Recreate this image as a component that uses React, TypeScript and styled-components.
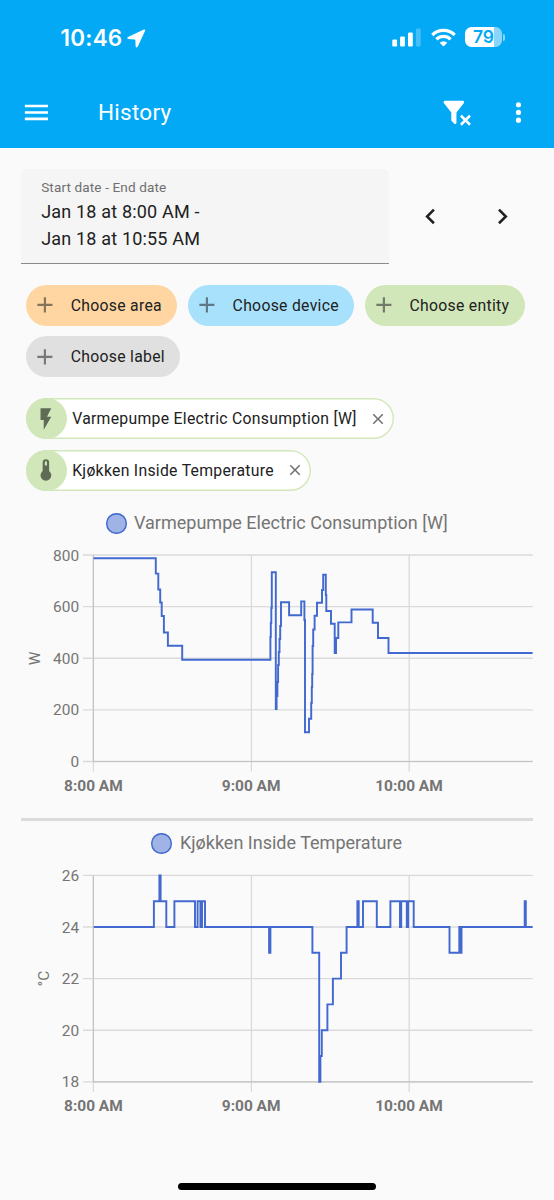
import React from "react";
import styled, { createGlobalStyle } from "styled-components";

const GlobalStyle = createGlobalStyle`
  *, *::before, *::after { box-sizing: border-box; }
  body {
    margin: 0;
    background: #fafafa;
    color: #212121;
    font-family: Roboto, "Noto Sans", sans-serif;
  }
  button { font: inherit; color: inherit; border: 0; background: none; padding: 0; margin: 0; }
`;

const paths = {
  menu: "M3,6H21V8H3V6M3,11H21V13H3V11M3,16H21V18H3V16Z",
  filterRemove:
    "M14.76,20.83L17.6,18L14.76,15.17L16.17,13.76L19,16.57L21.83,13.76L23.24,15.17L20.43,18L23.24,20.83L21.83,22.24L19,19.4L16.17,22.24L14.76,20.83M12,12V19.88C12.04,20.18 11.94,20.5 11.71,20.71C11.32,21.1 10.69,21.1 10.3,20.71L8.29,18.7C8.06,18.47 7.96,18.16 8,17.87V12H7.97L2.21,4.62C1.87,4.19 1.95,3.56 2.38,3.22C2.57,3.08 2.78,3 3,3V3H17V3C17.22,3 17.43,3.08 17.62,3.22C18.05,3.56 18.13,4.19 17.79,4.62L12.03,12H12Z",
  dots: "M12,16A2,2 0 0,1 14,18A2,2 0 0,1 12,20A2,2 0 0,1 10,18A2,2 0 0,1 12,16M12,10A2,2 0 0,1 14,12A2,2 0 0,1 12,14A2,2 0 0,1 10,12A2,2 0 0,1 12,10M12,4A2,2 0 0,1 14,6A2,2 0 0,1 12,8A2,2 0 0,1 10,6A2,2 0 0,1 12,4Z",
  chevronLeft: "M15.41,16.58L10.83,12L15.41,7.41L14,6L8,12L14,18L15.41,16.58Z",
  chevronRight: "M8.59,16.58L13.17,12L8.59,7.41L10,6L16,12L10,18L8.59,16.58Z",
  plus: "M19,13H13V19H11V13H5V11H11V5H13V11H19V13Z",
  close:
    "M19,6.41L17.59,5L12,10.59L6.41,5L5,6.41L10.59,12L5,17.59L6.41,19L12,13.41L17.59,19L19,17.59L13.41,12L19,6.41Z",
  flash: "M7,2V13H10V22L17,10H13L17,2H7Z",
  thermometer:
    "M15 13V5A3 3 0 0 0 9 5V13A5 5 0 1 0 15 13M12 4A1 1 0 0 1 13 5V8H11V5A1 1 0 0 1 12 4Z",
};

const IconSvg = styled.svg<{ $size: number }>`
  display: block;
  flex: none;
  width: ${(p) => p.$size}px;
  height: ${(p) => p.$size}px;
  fill: currentColor;
`;

function Icon({ name, size = 30.9 }: { name: keyof typeof paths; size?: number }) {
  return (
    <IconSvg $size={size} viewBox="0 0 24 24" aria-hidden="true">
      <path d={paths[name]} />
    </IconSvg>
  );
}

const Page = styled.div`
  width: 554px;
  height: 1200px;
  display: flex;
  flex-direction: column;
  overflow: hidden;
`;

const Header = styled.header`
  height: 148px;
  flex: none;
  background: #04a9f5;
  color: #fff;
`;

const StatusBar = styled.div`
  height: 76px;
  padding: 0 49.2px 0 60.5px;
  display: flex;
  justify-content: space-between;
  align-items: center;
`;

const Clock = styled.div`
  display: flex;
  align-items: center;
  gap: 4.7px;
  font: 600 22.4px/26px Inter, sans-serif;
  letter-spacing: 0.25px;
`;

const StatusIcons = styled.div`
  display: flex;
  align-items: center;
  gap: 10px;
  margin-top: -2px;
  svg { display: block; }
`;

const Battery = styled.div`
  display: flex;
  align-items: center;
  gap: 1px;
  margin-left: -1px;
`;

const BatteryBody = styled.div`
  width: 37px;
  height: 20px;
  border-radius: 6.5px;
  background: linear-gradient(to right, #fff 78%, #8ad5fb 78%);
  color: #04a9f5;
  text-align: center;
  font: 600 17.5px/20px Inter, sans-serif;
  letter-spacing: -0.2px;
`;

const BatteryTip = styled.div`
  width: 2px;
  height: 7px;
  border-radius: 0 2px 2px 0;
  background: #8ad5fb;
`;

const Toolbar = styled.div`
  height: 72px;
  padding: 0 20.6px;
  display: flex;
  align-items: center;
`;

const ToolbarTitle = styled.h1`
  flex: 1;
  margin: 1px 0 0 46.4px;
  font-size: 22.54px;
  font-weight: 400;
  letter-spacing: 0.0125em;
  line-height: 30px;
`;

const MenuSlot = styled.button`
  margin-left: 30.9px;
`;

const RangeRow = styled.div`
  display: flex;
  align-items: center;
  padding: 20.6px 0 0 20.6px;
`;

const RangeField = styled.div`
  width: 368.4px;
  height: 95px;
  padding: 9.2px 20.6px 0;
  border-radius: 5px 5px 0 0;
  border-bottom: 1.3px solid #8b8b8b;
  background: #f5f5f5;
`;

const RangeLabel = styled.div`
  font-size: 13.55px;
  line-height: 18px;
  letter-spacing: 0.0094em;
  color: #6f6f6f;
`;

const RangeValue = styled.div`
  margin-top: 1.8px;
  font-size: 18.03px;
  line-height: 27.05px;
  letter-spacing: 0.0094em;
`;

const RangeNav = styled.div`
  display: flex;
  gap: 41.2px;
  margin-left: 26.1px;
`;

const PickerRow = styled.div`
  display: flex;
  flex-wrap: wrap;
  gap: 10.3px;
  padding: 21.2px 20px 0 25.8px;
`;

const PickerChip = styled.button<{ $color: string }>`
  display: flex;
  align-items: center;
  height: 41.2px;
  padding: 0 15.4px 0 6.4px;
  gap: 12.8px;
  border-radius: 20.6px;
  background: ${(p) => p.$color};
  font-size: 15.78px;
  letter-spacing: 0.0179em;
  svg { opacity: 0.54; }
`;

const EntityList = styled.div`
  display: flex;
  flex-direction: column;
  align-items: flex-start;
  gap: 10.3px;
  padding: 20.8px 0 20.3px 25.8px;
`;

const EntityChip = styled.div`
  display: flex;
  align-items: center;
  height: 41.2px;
  padding-right: 7.4px;
  border-radius: 20.6px;
  background: #fff;
  box-shadow: inset 0 0 0 1.4px #d1e7b9;
  font-size: 15.78px;
  letter-spacing: 0.0179em;
`;

const EntityIcon = styled.span`
  width: 41.2px;
  height: 41.2px;
  margin-right: 5.2px;
  display: flex;
  align-items: center;
  justify-content: center;
  border-radius: 50%;
  background: #d1e7b9;
  color: #606b55;
`;

const RemoveButton = styled.button`
  margin-left: 11.8px;
  color: #6f6f6f;
`;

const ChartBlock = styled.section`
  display: flex;
  flex-direction: column;
  align-items: center;
`;

const Legend = styled.div`
  display: flex;
  align-items: center;
  gap: 7.5px;
  height: 24px;
  margin-right: 0.6px;
  font-size: 18.03px;
  line-height: 24px;
  color: #757575;
`;

const LegendDot = styled.span`
  width: 21px;
  height: 21px;
  margin-top: 1px;
  border-radius: 50%;
  background: #a0b3e7;
  box-shadow: inset 0 0 0 1.4px #4269d0;
`;

const Plot = styled.svg`
  display: block;
  width: 554px;
  height: 264px;
  font-family: Roboto, sans-serif;
  font-size: 15.45px;
  fill: #757575;
`;

const Divider = styled.hr`
  width: 512px;
  height: 3px;
  margin: 19.2px auto 9.8px 20.8px;
  border: 0;
  background: #dbdbdb;
`;

const HomeIndicator = styled.div`
  width: 198px;
  height: 6.5px;
  margin: auto auto 10.5px;
  border-radius: 4px;
  background: #000;
`;

type Step = [x: number, y: number];

/* Each entry is the x where a level starts and the height of that level. */
const powerSteps: Step[] = [
  [93.5, 23.2], [155.8, 38.6], [158.3, 54.5], [160.2, 67.5], [161.7, 81], [163.9, 97.5],
  [167.9, 110.7], [182.2, 124.7], [270.4, 102], [270.8, 88], [271.3, 73], [271.8, 37.2],
  [275.8, 174], [276.6, 161], [277.4, 147], [278.1, 130], [278.8, 117], [279.5, 104],
  [280.2, 91], [281, 67.2], [289.1, 80.3], [301.2, 66.4], [304.4, 85], [305, 197.3],
  [309, 183.7], [311.2, 168], [311.8, 152], [312.2, 139], [312.6, 111], [313.2, 94.5], [314.6, 80.8],
  [317, 67.8], [322, 55], [323.2, 39.8], [325.8, 60], [326.3, 76], [331, 88.8],
  [334.7, 118], [336, 103], [338.3, 87.4], [351.5, 74.5], [372.7, 87.7], [378, 103],
  [388.5, 118], [532.6, 118],
];

const temperatureSteps: Step[] = [
  [93.8, 24], [153.9, 25], [159.4, 26], [160.6, 25], [166.3, 24], [174.4, 25], [195, 24],
  [197.6, 25], [200.4, 24], [202, 25], [205, 24], [269.1, 23], [270.4, 24], [312.4, 23],
  [319.2, 18], [320.4, 19], [321.8, 20], [327.4, 21], [332.9, 22], [341, 23], [346.6, 24],
  [357.4, 25], [358.7, 24], [363, 25], [376.8, 24], [390.4, 25], [400, 24], [401.2, 25],
  [406.8, 24], [408.1, 25], [413.7, 24], [449.5, 23], [459.3, 24], [460.4, 23], [461.5, 24],
  [524.7, 25], [525.8, 24], [532.6, 24],
].map(([x, t]) => [x, 20.4 + (26 - t) * 25.8] as Step);

function stepPath(steps: Step[]) {
  return steps.map(([x, y], i) => (i ? `H${x}V${y}` : `M${x} ${y}`)).join("");
}

interface ChartProps {
  title: string;
  unit: string;
  unitX: number;
  top: number;
  ticks: string[];
  steps: Step[];
}

function Chart({ title, unit, unitX, top, ticks, steps }: ChartProps) {
  const bottom = top + 206.5;
  return (
    <ChartBlock>
      <Legend>
        <LegendDot />
        {title}
      </Legend>
      <Plot viewBox="0 0 554 264">
        <g stroke="#dadada" strokeWidth="1.3">
          {ticks.map((tick, i) => (
            <line key={tick} x1="83" x2="532.7" y1={top + i * 51.62} y2={top + i * 51.62} />
          ))}
          {[93.4, 251.4, 409.2].map((x) => (
            <line key={x} x1={x} x2={x} y1={top} y2={bottom + 10} />
          ))}
          <path d={`M93.4 ${top}V${bottom}H532.7`} fill="none" stroke="#c2c2c2" strokeWidth="1.2" />
        </g>
        {ticks.map((tick, i) => (
          <text key={tick} x="79.1" y={top + i * 51.62 + 5.5} textAnchor="end">
            {tick}
          </text>
        ))}
        {["8:00 AM", "9:00 AM", "10:00 AM"].map((time, i) => (
          <text key={time} x={93.4 + i * 157.8} y={bottom + 29.3} textAnchor="middle" fontWeight="700">
            {time}
          </text>
        ))}
        <text transform={`translate(${unitX} ${top + 103.3}) rotate(-90)`} textAnchor="middle">
          {unit}
        </text>
        <path d={stepPath(steps)} fill="none" stroke="#4269d0" strokeWidth="1.93" />
      </Plot>
    </ChartBlock>
  );
}

const pickers = [
  { label: "Choose area", color: "#ffd6a2" },
  { label: "Choose device", color: "#a8e1fc" },
  { label: "Choose entity", color: "#d1e7b9" },
  { label: "Choose label", color: "#e0e0e0" },
];

const entities: { name: string; icon: keyof typeof paths }[] = [
  { name: "Varmepumpe Electric Consumption [W]", icon: "flash" },
  { name: "Kjøkken Inside Temperature", icon: "thermometer" },
];

export default function App() {
  return (
    <Page>
      <GlobalStyle />
      <Header>
        <StatusBar>
          <Clock>
            10:46
            <svg width="19" height="19" viewBox="0 0 19 19" fill="#fff">
              <path d="M16.9.6 1 8C0 8.5.1 9.9 1.3 10l6.3.6c.6.1.8.3.8.9l.2 5.8c.1 1.3 1.6 1.5 2.1.4L18.1 1.8C18.5.9 17.8.2 16.9.6Z" />
            </svg>
          </Clock>
          <StatusIcons>
            <svg width="29" height="19" viewBox="0 0 29 19" fill="#fff">
              <rect x="0.3" y="11.5" width="4.8" height="7" rx="1.2" />
              <rect x="8.1" y="8.5" width="4.8" height="10" rx="1.2" />
              <rect x="16" y="4.5" width="4.8" height="14" rx="1.2" />
              <rect x="23.9" y="0.5" width="4.8" height="18" rx="1.2" opacity="0.25" />
            </svg>
            <svg width="25" height="19" viewBox="0 0 25 19" fill="none" stroke="#fff" strokeWidth="3.2">
              <path d="M1.3 7A16 16 0 0 1 23.7 7" />
              <path d="M5.4 11.4A10 10 0 0 1 19.6 11.4" />
              <path d="M12.5 18.4 8.7 14.7A5.4 5.4 0 0 1 16.3 14.7Z" fill="#fff" stroke="none" />
            </svg>
            <Battery>
              <BatteryBody>79</BatteryBody>
              <BatteryTip />
            </Battery>
          </StatusIcons>
        </StatusBar>
        <Toolbar>
          <button aria-label="Menu">
            <Icon name="menu" />
          </button>
          <ToolbarTitle>History</ToolbarTitle>
          <button aria-label="Remove filters">
            <Icon name="filterRemove" />
          </button>
          <MenuSlot aria-label="More">
            <Icon name="dots" />
          </MenuSlot>
        </Toolbar>
      </Header>

      <RangeRow>
        <RangeField>
          <RangeLabel>Start date - End date</RangeLabel>
          <RangeValue>
            Jan 18 at 8:00 AM -
            <br />
            Jan 18 at 10:55 AM
          </RangeValue>
        </RangeField>
        <RangeNav>
          <button aria-label="Previous">
            <Icon name="chevronLeft" />
          </button>
          <button aria-label="Next">
            <Icon name="chevronRight" />
          </button>
        </RangeNav>
      </RangeRow>

      <PickerRow>
        {pickers.map((p) => (
          <PickerChip key={p.label} $color={p.color}>
            <Icon name="plus" size={25.8} />
            {p.label}
          </PickerChip>
        ))}
      </PickerRow>

      <EntityList>
        {entities.map((e) => (
          <EntityChip key={e.name}>
            <EntityIcon>
              <Icon name={e.icon} size={25.8} />
            </EntityIcon>
            {e.name}
            <RemoveButton aria-label="Remove">
              <Icon name="close" size={18} />
            </RemoveButton>
          </EntityChip>
        ))}
      </EntityList>

      <Chart
        title="Varmepumpe Electric Consumption [W]"
        unit="W"
        unitX={40}
        top={20}
        ticks={["800", "600", "400", "200", "0"]}
        steps={powerSteps}
      />
      <Divider />
      <Chart
        title="Kjøkken Inside Temperature"
        unit="°C"
        unitX={49}
        top={20.4}
        ticks={["26", "24", "22", "20", "18"]}
        steps={temperatureSteps}
      />
      <HomeIndicator />
    </Page>
  );
}
